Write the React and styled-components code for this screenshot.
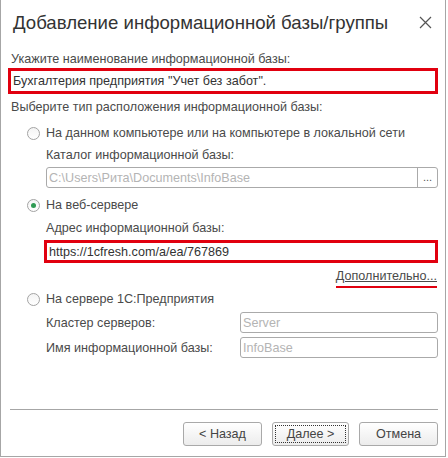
import React from "react";
import styled, { createGlobalStyle } from "styled-components";

const GlobalStyle = createGlobalStyle`
  html, body {
    margin: 0;
    padding: 0;
    background: #ffffff;
  }
  body {
    font-family: "Liberation Sans", Arial, sans-serif;
    font-size: 12.6px;
    color: #4a4a4a;
  }
`;

const RED = "#e1000f";

const Window = styled.div`
  width: 446px;
  height: 457px;
  box-sizing: border-box;
  border: 1px solid #a6a6a6;
  border-top: none;
  background: #fff;
  display: flex;
  flex-direction: column;
`;

const Header = styled.div`
  height: 44px;
  box-sizing: border-box;
  display: flex;
  align-items: center;
  justify-content: space-between;
  padding: 2px 12px 0 12px;
  flex-shrink: 0;
`;

const Title = styled.div`
  font-size: 18.6px;
  color: #333;
`;

const Close = styled.button`
  border: none;
  background: none;
  padding: 0;
  width: 14px;
  height: 14px;
  display: flex;
  cursor: pointer;
`;

const Body = styled.div`
  flex: 1;
  display: flex;
  flex-direction: column;
  padding: 0 7px 0 6px;
`;

const Label = styled.div`
  line-height: 16px;
  margin-top: ${(p) => p.$mt || 0}px;
  margin-left: ${(p) => p.$ml || 0}px;
  white-space: nowrap;
`;

const Highlight = styled.div`
  box-sizing: border-box;
  height: ${(p) => p.$h}px;
  margin-top: ${(p) => p.$mt || 0}px;
  margin-left: ${(p) => p.$ml || 0}px;
  border: 3px solid ${RED};
  display: flex;
  align-items: center;
  padding-left: ${(p) => p.$pl || 2}px;
  color: #333;
  white-space: nowrap;
`;

const RadioRow = styled.label`
  display: flex;
  align-items: center;
  height: 16px;
  margin-top: ${(p) => p.$mt || 0}px;
  margin-left: 20px;
  gap: 6px;
  color: #4a4a4a;
`;

const RadioCircle = styled.span`
  width: 13px;
  height: 13px;
  box-sizing: border-box;
  border-radius: 50%;
  border: 1px solid #a3a3a3;
  background: linear-gradient(#f4f4f4, #ffffff);
  display: flex;
  align-items: center;
  justify-content: center;
  &::after {
    content: "";
    width: 5px;
    height: 5px;
    border-radius: 50%;
    background: ${(p) => (p.$checked ? "#2f9a53" : "transparent")};
  }
`;

const Field = styled.div`
  box-sizing: border-box;
  height: 21px;
  border: 1px solid #aaaaaa;
  border-radius: 3px;
  display: flex;
  align-items: center;
  margin-top: ${(p) => p.$mt || 0}px;
  margin-left: ${(p) => p.$ml || 0}px;
  width: ${(p) => (p.$w ? `${p.$w}px` : "auto")};
  background: #fff;
`;

const FieldText = styled.span`
  flex: 1;
  padding-left: 2px;
  color: #b4b4b4;
  white-space: nowrap;
  overflow: hidden;
`;

const DotsButton = styled.span`
  width: 20px;
  height: 100%;
  border-left: 1px solid #aaaaaa;
  display: flex;
  align-items: center;
  justify-content: center;
  font-size: 11px;
  color: #555;
  padding-bottom: 2px;
  box-sizing: border-box;
`;

const LinkRow = styled.div`
  display: flex;
  justify-content: flex-end;
  margin-top: 5px;
`;

const Link = styled.a`
  line-height: 16px;
  color: #4a4a4a;
  text-decoration: underline;
  text-underline-offset: 1px;
  padding-bottom: 2px;
  border-bottom: 2px solid ${RED};
  margin-right: 1px;
`;

const ServerRow = styled.div`
  display: flex;
  align-items: center;
  justify-content: space-between;
  margin-top: ${(p) => p.$mt || 0}px;
  margin-left: 39px;
`;

const Spacer = styled.div`
  flex: 1;
`;

const Separator = styled.div`
  height: 1px;
  background: #a6a6a6;
  margin-left: 3px;
`;

const Footer = styled.div`
  display: flex;
  justify-content: flex-end;
  gap: 10px;
  padding: 12px 0 10px;
`;

const Button = styled.button`
  position: relative;
  box-sizing: border-box;
  width: ${(p) => p.$w}px;
  height: 24px;
  border: 1px solid #a9a9a9;
  border-radius: 3px;
  background: linear-gradient(#ffffff, #ececec);
  font-family: "Liberation Sans", Arial, sans-serif;
  font-size: 12.6px;
  color: #444;
  padding: 0;
  ${(p) =>
    p.$focused &&
    `
    &::after {
      content: "";
      position: absolute;
      inset: 2px;
      border: 1px dotted #333;
    }
  `}
`;

export default function App() {
  return (
    <>
      <GlobalStyle />
      <Window>
        <Header>
          <Title>Добавление информационной базы/группы</Title>
          <Close aria-label="Закрыть">
            <svg width="13" height="13" viewBox="0 0 13 13">
              <path d="M1 1L12 12M12 1L1 12" stroke="#555" strokeWidth="1.2" />
            </svg>
          </Close>
        </Header>
        <Body>
          <Label $mt={7} $ml={4}>Укажите наименование информационной базы:</Label>
          <Highlight $h={26} $mt={1} $ml={1}>
            Бухгалтерия предприятия "Учет без забот".
          </Highlight>
          <Label $mt={5} $ml={4}>Выберите тип расположения информационной базы:</Label>

          <RadioRow $mt={10}>
            <RadioCircle />
            На данном компьютере или на компьютере в локальной сети
          </RadioRow>
          <Label $mt={6} $ml={39}>Каталог информационной базы:</Label>
          <Field $mt={4} $ml={39}>
            <FieldText>C:\Users\Рита\Documents\InfoBase</FieldText>
            <DotsButton>...</DotsButton>
          </Field>

          <RadioRow $mt={9}>
            <RadioCircle $checked />
            На веб-сервере
          </RadioRow>
          <Label $mt={7} $ml={39}>Адрес информационной базы:</Label>
          <Highlight $h={23} $mt={4} $ml={37} $pl={2}>
            https://1cfresh.com/a/ea/767869
          </Highlight>
          <LinkRow>
            <Link href="#">Дополнительно...</Link>
          </LinkRow>

          <RadioRow $mt={3}>
            <RadioCircle />
            На сервере 1С:Предприятия
          </RadioRow>
          <ServerRow $mt={5}>
            <span>Кластер серверов:</span>
            <Field $w={198}>
              <FieldText>Server</FieldText>
            </Field>
          </ServerRow>
          <ServerRow $mt={4}>
            <span>Имя информационной базы:</span>
            <Field $w={198}>
              <FieldText>InfoBase</FieldText>
            </Field>
          </ServerRow>

          <Spacer />
          <Separator />
          <Footer>
            <Button $w={79}>&lt; Назад</Button>
            <Button $w={77} $focused>Далее &gt;</Button>
            <Button $w={79}>Отмена</Button>
          </Footer>
        </Body>
      </Window>
    </>
  );
}
